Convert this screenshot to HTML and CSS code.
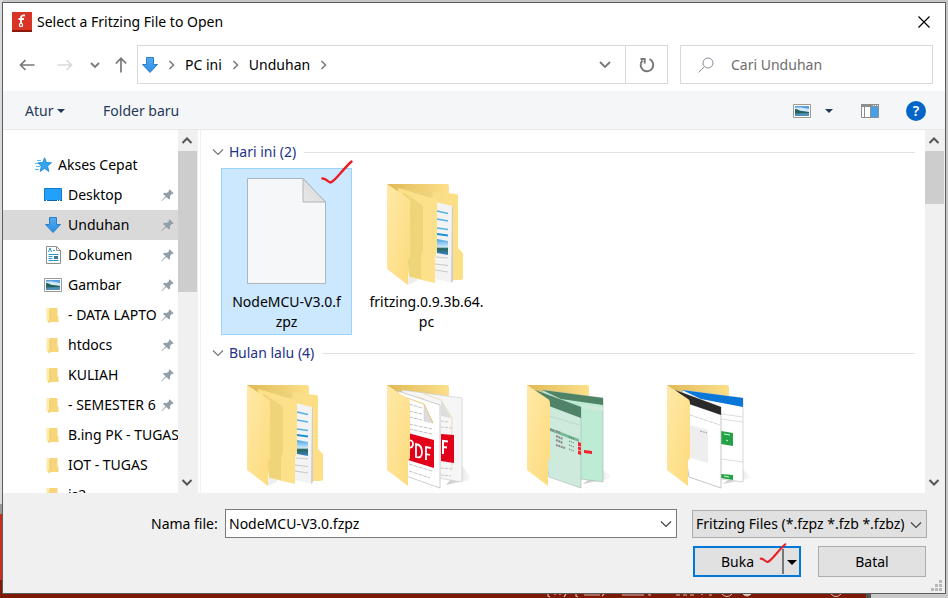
FILE: index.html
```html
<!DOCTYPE html>
<html lang="id">
<head>
<meta charset="utf-8">
<title>Select a Fritzing File to Open</title>
<link rel="stylesheet" href="styles.css">
</head>
<body>
<svg class="defs" aria-hidden="true">
  <defs>
    <linearGradient id="gFolder" x1="0" y1="0" x2="1" y2="1"><stop offset="0" stop-color="#ffe9a8"/><stop offset="1" stop-color="#fddb7c"/></linearGradient>
    <linearGradient id="gBack" x1="0" y1="0" x2="1" y2="0"><stop offset="0" stop-color="#dfb956"/><stop offset="1" stop-color="#fde08a"/></linearGradient>
    <linearGradient id="gInner" x1="0" y1="0" x2="1" y2="0"><stop offset="0" stop-color="#e8cb6c"/><stop offset=".5" stop-color="#eed27a"/><stop offset=".55" stop-color="#f9dd88"/><stop offset="1" stop-color="#fddf84"/></linearGradient>
    <linearGradient id="gSky" x1="0" y1="0" x2="0" y2="1"><stop offset="0" stop-color="#4aa3e8"/><stop offset=".5" stop-color="#cfe9f7"/><stop offset=".6" stop-color="#27655f"/><stop offset="1" stop-color="#3b86c4"/></linearGradient>
    <linearGradient id="gArrow" x1="0" y1="0" x2="0" y2="1"><stop offset="0" stop-color="#55aaf0"/><stop offset="1" stop-color="#2b8ee4"/></linearGradient>
    <linearGradient id="gFold" x1="0" y1="1" x2="1" y2="0"><stop offset="0" stop-color="#e9e9e9"/><stop offset="1" stop-color="#d4d4d4"/></linearGradient>
    <linearGradient id="gShadow" x1="0" y1="0" x2="1" y2="0"><stop offset="0" stop-color="#c8c8c8"/><stop offset="1" stop-color="#ffffff"/></linearGradient>
  </defs>
  <symbol id="down" viewBox="0 0 16 16"><path d="M4.500.5h7v7h4L8 15.500.5 7.500h4z" fill="url(#gArrow)" stroke="#2a7fcb"/></symbol>
  <symbol id="pin" viewBox="0 0 13 13"><path d="M8.500.3 12.700 4.200 11.600 4.900 10.900 4.800 9 6.900 9.200 9.500 8 10.500 5.300 8 1 12 .3 12.300.7 11.500 4.600 7.300 2 4.900 3.100 3.800 5.700 4.100 8 2.200 7.800 1.300Z" fill="#939fa8"/></symbol>
  <symbol id="picture" viewBox="0 0 18 14"><path d="M.5.5h17v13H.5z" fill="#fff" stroke="#9a9a9a"/><path d="M2 2h14v10H2z" fill="#5b9fe0"/><path d="M2 4c4-1 9 0 14 1v3H2z" fill="#cfe8f5"/><path d="M2 5c3 0 4 2 7 2s5 1 7 1v2H2z" fill="#26615b"/><path d="M2 9.500 16 9v3H2z" fill="#4f8fb8"/></symbol>
  <symbol id="minifolder" viewBox="0 0 13 17"><path d="M3 1h8.500v8l1 1v5H3z" fill="#f7d57a"/><path d="M.5.5 4 2.500v13.800L.5 14z" fill="#ffe9a6"/><path d="M4 3v9.500l-1 1V16" fill="none" stroke="#eec75e"/></symbol>
  <symbol id="check" viewBox="0 0 32 26"><path d="M1.500 18.500C5 18 7 22.500 9.500 22.500 14 21.500 21 10 30.500 1.500" fill="none" stroke="#ec1c24" stroke-width="2.400" stroke-linecap="round"/></symbol>
  <symbol id="chev" viewBox="0 0 12 12"><path d="m1 3.500 5 5 5-5" fill="none" stroke="currentColor" stroke-width="1.200"/></symbol>
  <symbol id="folderDocs" viewBox="0 0 84 106">
    <path d="M1 1h60q2 0 2 2v20H9z" fill="url(#gBack)"/>
    <path d="M12 5 70 11q2 0 2 2v52l5 5v24q0 3-2 3H66L12 80z" fill="url(#gInner)"/>
    <path d="M50 19 66 23v77L46 95z" fill="#f3f3f3"/><path d="m66 23 1 .5V98l-2 2z" fill="#ccc"/>
    <path d="m51 28 11 2.500M51 36l11 2M51 45l11 1.500" stroke="#53b2e4" stroke-width="1.300"/><path d="m51 51 11 1.500" stroke="#1d91d8" stroke-width="2"/>
    <path d="m51 56 11 2v14l-11-2z" fill="url(#gSky)"/>
    <path d="m50 74 12 1M49 81l13 1.500M49 87l13 2" stroke="#c9c9c9"/>
    <path d="m21 94 10-1v5l-9 4z" fill="#eee"/>
    <path d="M12 5 49 16q2 1 2 3v49l-2 6v26L23 94z" fill="#fde08a"/>
    <path d="M17 9 36 22q1 1 1 4v42l-2 5v23L23 93z" fill="#f0d47a"/>
    <path d="M1 1 22 15q2 1 2 5v54l-2 3v25L1 86z" fill="url(#gFolder)"/>
  </symbol>
  <symbol id="folderPdf" viewBox="0 0 84 106">
    <path d="M76 82 87 95 60 101z" fill="url(#gShadow)"/>
    <path d="M1 1h60q2 0 2 2v20H9z" fill="url(#gBack)"/>
    <path d="m16 6 60 8v84l-18-3-36-10z" fill="#f6f6f6" stroke="#c7c7c7" stroke-width=".6"/>
    <path d="M38 10 55 16 66 34v52M20 10l18 5 11 23v45" fill="none" stroke="#ead39a" stroke-width=".7"/>
    <path d="m55 16 10 18-10-2z" fill="#ddd"/><path d="M55 50l13 1v28l-13-2z" fill="#e2001a"/>
    <path d="M57 70V57l5 .6M57 63l4 .4" stroke="#fff" fill="none" stroke-width="2"/>
    <path d="m55 37 8 1M55 43l11 1M55 84l11 1M55 91l10 1" stroke="#c8c8c8" stroke-dasharray="3 1"/>
    <path d="m12 7 42 14v83L20 92z" fill="#fff" stroke="#c2c2c2" stroke-width=".8"/>
    <path d="M38 20 47 39l-9-2z" fill="#ddd" stroke="#c8c8c8" stroke-width=".5"/><path d="m18 13 20 7 9 19" fill="none" stroke="#eccb80"/>
    <path d="m23 20 13 4M23 27l13 3M23 33l13 3M23 40l23 5M23 45l23 5M23 80l23 7M23 87l21 7" stroke="#c2c2c2" stroke-dasharray="4 1"/>
    <path d="m22 49 26 7v28l-26-8z" fill="#e2001a"/>
    <path d="M21 68V57q6-2 6 3 0 4-5 4M30 73V60q6 1 6 8t-6 5zM40 76V63l5 1M40 70l4 1" stroke="#fff" fill="none" stroke-width="1.800"/>
    <path d="M1 1 22 15q2 1 2 5v54l-2 3v25L1 86z" fill="url(#gFolder)"/>
  </symbol>
  <symbol id="folderGreen" viewBox="0 0 84 106">
    <path d="M76 85 87 94 57 100z" fill="url(#gShadow)"/>
    <path d="M1 1h60q2 0 2 2v15H9z" fill="url(#gBack)"/>
    <path d="m16 6 61 8v84l-22-3z" fill="#bdebd3" stroke="#a8b9ae" stroke-width=".6"/>
    <path d="m16 6 61 8v7L35 15z" fill="#4f8266"/><path d="M55 21 77 23v4l-22-3z" fill="#cde9dc"/>
    <path d="m58 66 8 1v3l-8-1z" fill="#f2232c"/>
    <path d="m9 6 46 17v81L23 93z" fill="#cdeadd" stroke="#a8b9ae" stroke-width=".6"/><path d="m9 6 46 17v11L23 22z" fill="#4f8266"/>
    <path d="m24 44 29 11v3L24 47z" fill="#79b898"/><path d="m24 32 29 9" stroke="#b9d9ca"/>
    <path d="m24 45 4 2M30 47l5 2M30 52l7 3M30 56l7 3M30 61l9 3" stroke="#8c8c8c" stroke-width="2" stroke-dasharray="2 .5"/><path d="m43 53 5 2M43 57l5 2M43 61l5 2M43 65l5 2" stroke="#456a57" stroke-dasharray="1 1"/>
    <path d="m52 58 3 1v12l-3-1z" fill="#f2232c"/><path d="m52 62 3 1M52 66l3 1" stroke="#fff" stroke-width=".7"/>
    <path d="M1 1 22 15q2 1 2 5v54l-2 3v25L1 86z" fill="url(#gFolder)"/>
  </symbol>
  <symbol id="folderWeb" viewBox="0 0 84 106">
    <path d="M76 85 87 94 57 100z" fill="url(#gShadow)"/>
    <path d="M1 1h60q2 0 2 2v15H9z" fill="url(#gBack)"/>
    <path d="m16 6 61 8v84l-22-3z" fill="#fff" stroke="#bcbcbc" stroke-width=".6"/>
    <path d="m16 6 61 8v9L35 15z" fill="#0a76d8"/><path d="m55 30 22 3M55 35l22 3M55 75l22 3" stroke="#ddd"/>
    <path d="m55 47 12 2v13l-12-2zM55 90l12 1v5l-12-2z" fill="#25a244"/><path d="m58 50 6 1M60 56l2 1M58 92l5 1" stroke="#d8f2df"/>
    <path d="m9 6 46 17v81L23 93z" fill="#fff" stroke="#b8b8b8" stroke-width=".8"/><path d="m9 6 46 17v8L23 20z" fill="#2a2a2a"/>
    <path d="m24 31 30 10" stroke="#bbb" stroke-width=".7" stroke-dasharray="4 1"/><path d="m24 41 18 5v33l-18-5z" fill="#eee"/><path d="m34 47 7 2" stroke="#999" stroke-dasharray="2 1"/>
    <path d="M1 1 22 15q2 1 2 5v54l-2 3v25L1 86z" fill="url(#gFolder)"/>
  </symbol>
</svg>

<main class="dialog">
  <header class="titlebar">
    <svg class="app-icon" viewBox="0 0 20 20"><path d="M0 0h20v20H0z" fill="#d93425"/><path d="M0 18h20v2H0z" fill="#8c1a0c"/><path d="M13 3.500c-3-.5-4 .5-4 3V12M6.500 7H12" fill="none" stroke="#fff" stroke-width="1.800"/><circle cx="9" cy="13" r="1.600" fill="#d93425" stroke="#fff" stroke-width="1.200"/></svg>
    <h1>Select a Fritzing File to Open</h1>
    <button class="close" aria-label="Tutup"><svg width="12" height="12" viewBox="0 0 12 12"><path d="m.5.5 11 11M11.500.5l-11 11" stroke="#000" stroke-width="1.200"/></svg></button>
  </header>

  <div class="address-row">
    <nav class="history">
      <button aria-label="Kembali"><svg width="16" height="12" viewBox="0 0 16 12"><path d="M15.500 6H1.500M6.500 1l-5 5 5 5" fill="none" stroke="#777" stroke-width="1.700"/></svg></button>
      <button aria-label="Maju"><svg width="16" height="12" viewBox="0 0 16 12"><path d="M.5 6h14M9.500 1l5 5-5 5" fill="none" stroke="#d9d9d9" stroke-width="1.700"/></svg></button>
      <button class="recent" aria-label="Lokasi terbaru"><svg width="10" height="8" viewBox="0 0 10 8"><path d="m1 2 4 4 4-4" fill="none" stroke="#777" stroke-width="1.800"/></svg></button>
      <button class="up" aria-label="Naik"><svg width="12" height="16" viewBox="0 0 12 16"><path d="M6 15.500v-14M.8 6.500 6 1.300l5.200 5.200" fill="none" stroke="#777" stroke-width="1.700"/></svg></button>
    </nav>
    <div class="address">
      <svg class="place" width="16" height="16"><use href="#down"/></svg>
      <svg class="crumb-sep" viewBox="0 0 6 10"><path d="m1 1 4 4-4 4" fill="none" stroke="#777" stroke-width="1.500"/></svg>
      <a href="#pc">PC ini</a>
      <svg class="crumb-sep" viewBox="0 0 6 10"><path d="m1 1 4 4-4 4" fill="none" stroke="#777" stroke-width="1.500"/></svg>
      <a href="#unduhan">Unduhan</a>
      <svg class="crumb-sep" viewBox="0 0 6 10"><path d="m1 1 4 4-4 4" fill="none" stroke="#777" stroke-width="1.500"/></svg>
      <button class="address-drop" aria-label="Lokasi sebelumnya"><svg width="12" height="8" viewBox="0 0 12 8"><path d="m1 1 5 5 5-5" fill="none" stroke="#777" stroke-width="1.800"/></svg></button>
      <button class="refresh" aria-label="Segarkan"><svg width="16" height="16" viewBox="0 0 16 16"><path d="M10.500 2.200A6.300 6.300 0 1 1 3.500 3.500M1.500 2h4.200v4.500" fill="none" stroke="#777" stroke-width="1.900"/></svg></button>
    </div>
    <label class="search"><svg width="16" height="16" viewBox="0 0 16 16"><circle cx="10" cy="6" r="5" fill="none" stroke="#8b8b99"/><path d="M6.500 9.500.5 15.500" stroke="#8b8b99"/></svg><input type="search" placeholder="Cari Unduhan" aria-label="Cari Unduhan"></label>
  </div>

  <div class="toolbar">
    <button>Atur <i class="caret"></i></button>
    <button>Folder baru</button>
    <button class="view" aria-label="Ubah tampilan"><svg width="18" height="14"><use href="#picture"/></svg><i class="caret"></i></button>
    <button class="preview" aria-label="Panel pratinjau"><svg width="18" height="14" viewBox="0 0 18 14"><path d="M.5.5h17v13H.5z" fill="#fff" stroke="#8d8d8d"/><path d="M0 0h18v3H0zM3 3h1v11H3z" fill="#8d8d8d"/><path d="M10 3h7v10h-7z" fill="#45a1e8"/><path d="M9 3h1v10H9z" fill="#8d8d8d"/><path d="M12 1h1v1h-1zM14 1h1v1h-1zM16 1h1v1h-1z" fill="#fff"/></svg></button>
    <button class="help" aria-label="Bantuan">?</button>
  </div>

  <div class="browser">
    <nav class="places">
      <ul>
        <li class="root"><svg width="18" height="16" viewBox="0 0 18 16"><path d="m10.500.7 2 4.800 5 .3-3.900 3.300 1.300 5.400-4.400-3-4.400 3 1.200-5.300L4 5.800l4.800-.4z" fill="#36a5f0" stroke="#1b82d2" stroke-width=".8"/><path d="M3 3.500h4M1 6.500h3M2 9.500h4M1 12.500h4" stroke="#5eb5f0"/></svg><span>Akses Cepat</span></li>
        <li><svg width="18" height="14" viewBox="0 0 18 14"><path d="M.5.5h17v12H.5z" fill="#22a0fa" stroke="#1379cd"/><path d="M0 12h18v1H0z" fill="#0c67b2"/><path d="M2 12h1v1H2zM13 12h1v1h-1zM15 12h1v1h-1z" fill="#fff"/></svg><span>Desktop</span><svg class="pin"><use href="#pin"/></svg></li>
        <li class="current"><svg width="18" height="16"><use href="#down"/></svg><span>Unduhan</span><svg class="pin"><use href="#pin"/></svg></li>
        <li><svg width="18" height="18" viewBox="0 0 18 18"><path d="M2.500.5h10l4 4v13h-14z" fill="#fff" stroke="#8f8f8f"/><path d="M12.500.5v4h4" fill="none" stroke="#8f8f8f"/><path d="m4.500 6 1.500-4 1.500 4M9 4.500h2M4.500 8.500h10M4.500 10.500h4M4.500 12.500h4M4.500 14.500h10" fill="none" stroke="#2b95cc"/><path d="M10 10h4v3h-4z" fill="#3c7894"/></svg><span>Dokumen</span><svg class="pin"><use href="#pin"/></svg></li>
        <li><svg width="18" height="14"><use href="#picture"/></svg><span>Gambar</span><svg class="pin"><use href="#pin"/></svg></li>
        <li><svg class="mini"><use href="#minifolder"/></svg><span>- DATA LAPTOP</span><svg class="pin"><use href="#pin"/></svg></li>
        <li><svg class="mini"><use href="#minifolder"/></svg><span>htdocs</span><svg class="pin"><use href="#pin"/></svg></li>
        <li><svg class="mini"><use href="#minifolder"/></svg><span>KULIAH</span><svg class="pin"><use href="#pin"/></svg></li>
        <li><svg class="mini"><use href="#minifolder"/></svg><span>- SEMESTER 6</span><svg class="pin"><use href="#pin"/></svg></li>
        <li><svg class="mini"><use href="#minifolder"/></svg><span>B.ing PK - TUGAS</span></li>
        <li><svg class="mini"><use href="#minifolder"/></svg><span>IOT - TUGAS</span></li>
        <li><svg class="mini"><use href="#minifolder"/></svg><span>js2</span></li>
      </ul>
    </nav>
    <div class="scrollbar places-bar"><svg viewBox="0 0 12 12"><path d="m1.500 8 4.500-4.500L10.500 8" /></svg><i></i><svg viewBox="0 0 12 12"><path d="m1.500 4 4.500 4.500L10.500 4"/></svg></div>
    <section class="files">
      <h2><svg width="12" height="12"><use href="#chev"/></svg>Hari ini (2)</h2>
      <div class="grid">
        <a href="#nodemcu" class="item selected">
          <svg class="thumb" viewBox="0 0 84 106"><path d="M1.500.5H57L79.500 24v81.500h-78z" fill="#f6f7f8" stroke="#adb6bd"/><path d="M57 .5 79.500 24H57z" fill="url(#gFold)" stroke="#adb6bd"/></svg>
          <span>NodeMCU-V3.0.f<br>zpz</span>
          <svg class="mark"><use href="#check"/></svg>
        </a>
        <a href="#fritzing" class="item folder"><svg class="thumb"><use href="#folderDocs"/></svg><span>fritzing.0.9.3b.64.<br>pc</span></a>
      </div>
      <h2><svg width="12" height="12"><use href="#chev"/></svg>Bulan lalu (4)</h2>
      <div class="grid">
        <a href="#f1" class="item folder" aria-label="Folder dokumen"><svg class="thumb"><use href="#folderDocs"/></svg></a>
        <a href="#f2" class="item folder" aria-label="Folder PDF"><svg class="thumb"><use href="#folderPdf"/></svg></a>
        <a href="#f3" class="item folder" aria-label="Folder tabel"><svg class="thumb"><use href="#folderGreen"/></svg></a>
        <a href="#f4" class="item folder" aria-label="Folder web"><svg class="thumb"><use href="#folderWeb"/></svg></a>
      </div>
    </section>
    <div class="scrollbar files-bar"><svg viewBox="0 0 12 12"><path d="m1.500 8 4.500-4.500L10.500 8"/></svg><i></i><svg viewBox="0 0 12 12"><path d="m1.500 4 4.500 4.500L10.500 4"/></svg></div>
  </div>

  <form class="footer">
    <div class="fields">
      <label for="filename">Nama file:</label>
      <div class="combo name"><input id="filename" type="text" value="NodeMCU-V3.0.fzpz"><svg width="12" height="12"><use href="#chev"/></svg></div>
      <div class="combo type"><select aria-label="Jenis file"><option>Fritzing Files (*.fzpz *.fzb *.fzbz)</option></select><svg width="12" height="12"><use href="#chev"/></svg></div>
    </div>
    <div class="actions">
      <div class="split"><button type="button" class="open">Buka</button><button type="button" class="more" aria-label="Opsi lainnya"><i class="caret"></i></button><svg class="mark"><use href="#check"/></svg></div>
      <button type="button" class="cancel">Batal</button>
    </div>
    <svg class="grip" viewBox="0 0 11 11"><path d="M8 0h3v3H8zM8 4h3v3H8zM8 8h3v3H8zM4 4h3v3H4zM4 8h3v3H4zM0 8h3v3H0z" fill="#b8b8b8"/></svg>
  </form>
</main>
<svg class="statusbar" width="320" height="4" viewBox="0 0 320 4" aria-hidden="true"><g fill="none" stroke="#d8c0ba"><path d="M2 0v2l2 1M9 0v1M14 0v1M20 0l-2 3M30 0v2l2 1M38 1h16M58 0l-2 2M76 1h22M103 0v1h2M130 1h4M137 1h4M144 1h4M156 0v1M163 1h3" stroke-width="1.200"/><path d="M176 0q5 5 10 0M285 0q5 5 10 0"/><path d="M197 0h8q-4 4-8 0" fill="#ddd"/></g></svg>
</body>
</html>
```
FILE: styles.css
```css
* { box-sizing: border-box; }
html, body { height: 100%; }
body {
  position: relative;
  margin: 0;
  padding: 2px 2px 4px;
  display: flex;
  font: 14px/20px "Noto Sans", "Open Sans", sans-serif;
  color: #000;
  background:
    linear-gradient(90deg, #7d1907 calc(100% - 82px), #555 0 calc(100% - 77px), #c9c9c9 0) left bottom / 100% 18px no-repeat,
    linear-gradient(#d9dade 504px, #999 0 514px, #c92d1e 0) left top / 3px 100% no-repeat,
    #c6c6c6;
}
.defs { position: absolute; width: 0; height: 0; }
.statusbar { position: absolute; right: 82px; bottom: 0; }
button, input, select { font: inherit; color: inherit; margin: 0; }
button { border: 0; padding: 0; background: none; }
a { color: inherit; text-decoration: none; }
svg { display: block; flex: none; }
ul { list-style: none; margin: 0; padding: 0; }

.dialog {
  flex: 1;
  min-width: 0;
  display: flex;
  flex-direction: column;
  background: #fff;
  border: 1px solid #5c5c5c;
}

.titlebar { display: flex; align-items: center; gap: 5px; height: 40px; padding: 0 15px 3px 9px; }
.app-icon { width: 20px; height: 20px; }
.titlebar h1 { flex: 1; margin: 0; font-size: 14px; font-weight: 400; }

.address-row { display: flex; height: 48px; padding: 2px 12px 7px 16px; }
.history { display: flex; align-items: center; width: 118px; }
.history button { margin-right: 22px; }
.history .recent { margin-right: 15px; margin-left: -5px; }
.history .up { margin-right: 0; }
.address { flex: 1; display: flex; align-items: center; gap: 10px; border: 1px solid #d9d9d9; padding-left: 4px; }
.crumb-sep { width: 7px; height: 10px; }
.address-drop { margin-left: auto; margin-right: 4px; }
.refresh { display: flex; align-items: center; justify-content: center; align-self: stretch; width: 42px; border-left: 1px solid #d9d9d9; }
.search { display: flex; align-items: center; gap: 17px; width: 253px; margin-left: 12px; padding-left: 17px; border: 1px solid #d9d9d9; }
.search input { flex: 1; min-width: 0; border: 0; padding: 0; outline: 0; background: none; }
.search input::placeholder { color: #6d6d6d; opacity: 1; }

.toolbar { display: flex; align-items: center; height: 39px; padding: 1px 19px 0 22px; gap: 38px; color: #1e395b; background: #f5f6f7; border-bottom: 1px solid #e8e8e8; }
.caret { display: inline-block; border: 4px solid transparent; border-top-color: currentColor; border-bottom: 0; vertical-align: 3px; }
.view { display: flex; align-items: center; gap: 14px; margin-left: auto; }
.preview { margin-left: -10px; }
.help { width: 20px; height: 20px; margin-left: -11px; border-radius: 50%; background: #0566c8; color: #fff; font-weight: 600; line-height: 20px; }

.browser { flex: 1; min-height: 0; display: flex; }
.places { width: 175px; padding-top: 20px; overflow: hidden; }
.places li { display: flex; align-items: center; gap: 6px; height: 30px; padding: 0 4px 0 41px; }
.places li.root { padding-left: 31px; }
.places li.current { background: #d9d9d9; }
.places span { flex: 1; min-width: 0; overflow: hidden; white-space: nowrap; }
.places li:not(:has(.pin)) { padding-right: 0; }
.places .mini { width: 13px; height: 17px; margin: 0 1px 0 2px; }
.places .mini + span { margin-left: 2px; }
.places .pin { width: 13px; height: 13px; margin-left: -2px; }
.scrollbar { display: flex; flex-direction: column; width: 20px; padding: 4px 0 5px; background: #f0f0f0; }
.scrollbar svg { width: 12px; height: 12px; margin: 1px 0 0 3px; fill: none; stroke: #555; stroke-width: 2; }
.scrollbar i { width: 19px; height: 141px; margin: 4px 0 auto; background: #cdcdcd; }
.files-bar i { height: 53px; }
.files { flex: 1; min-width: 0; padding: 11px 10px 0 11px; margin-left: 2px; border-left: 1px solid #f0f0f0; overflow: hidden; }
.files h2 { display: flex; align-items: center; gap: 5px; height: 22px; margin: 0; font-size: 14px; font-weight: 400; color: #1e3287; }
.files h2 svg { color: #777; }
.files h2::after { content: ""; flex: 1; height: 1px; margin-left: 3px; background: #e2e2e2; }
.grid { display: flex; gap: 9px; padding: 5px 0 7px 9px; }
.item { position: relative; flex: none; width: 131px; height: 167px; padding: 9px 0 0; border: 1px solid transparent; text-align: center; }
.item.selected { background: #cce8ff; border-color: #99d1ff; }
.thumb { width: 84px; height: 106px; margin: 0 0 8px 24px; overflow: visible; }
.folder { padding-top: 14px; }
.folder .thumb { margin-bottom: 3px; }
.item .mark { position: absolute; top: -9px; right: -2px; width: 32px; height: 26px; }

.footer { position: relative; height: 100px; padding: 16px 18px 0 148px; background: #f0f0f0; }
.fields { display: flex; align-items: center; }
.fields label { width: 74px; white-space: nowrap; }
.combo { position: relative; height: 29px; border: 1px solid #7a7a7a; background: #fff; }
.combo.name { flex: 1; }
.combo.type { width: 235px; height: 28px; margin-left: 15px; border-color: #adadad; background: #e1e1e1; }
.combo input, .combo select { width: 100%; height: 100%; padding: 0 3px; border: 0; outline: 0; background: none; appearance: none; }
.combo svg { position: absolute; right: 4px; top: 8px; color: #444; pointer-events: none; }
.actions { display: flex; justify-content: flex-end; gap: 17px; margin: 8px 1px 0 0; }
.actions button { background: #e1e1e1; }
.split { position: relative; display: flex; width: 108px; height: 31px; border: 2px solid #0078d7; background: #e1e1e1; }
.open { flex: 1; padding-right: 2px; }
.actions .more { width: 17px; margin: 1px 0; border-left: 2px solid #777; line-height: 20px; }
.more .caret { border-width: 5px 5px 0; vertical-align: 2px; }
.split .mark { position: absolute; top: -5px; right: 11px; width: 30px; height: 22px; }
.actions .cancel { width: 108px; height: 31px; border: 1px solid #adadad; }
.grip { position: absolute; right: 3px; bottom: 2px; width: 11px; height: 11px; }
```
